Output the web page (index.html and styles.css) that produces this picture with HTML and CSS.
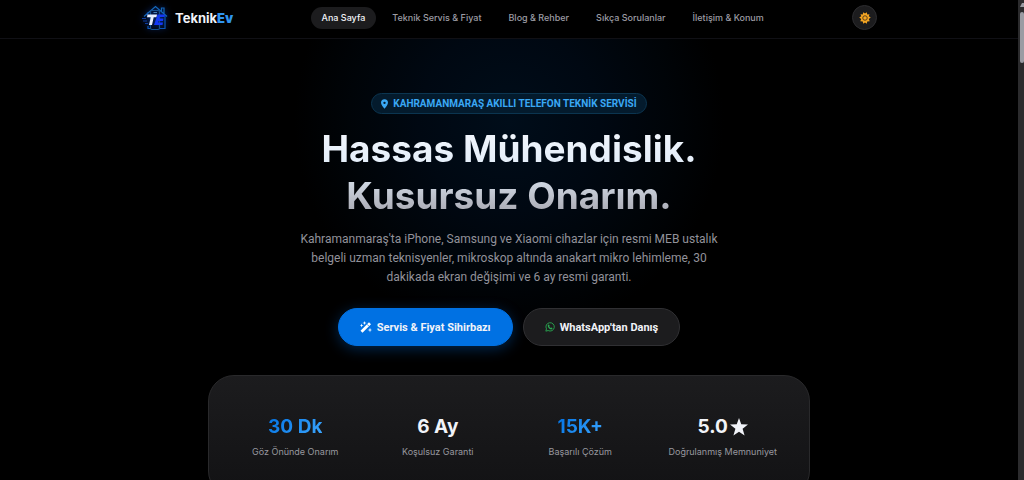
FILE: index.html
```
<!DOCTYPE html>
<html lang="tr">

<head>
    <meta charset="UTF-8">
    <meta name="viewport" content="width=device-width, initial-scale=1.0">
    <title>TeknikEv</title>
    <link rel="stylesheet" href="styles.css">
</head>

<body>
    <header class="navbar">
        <div class="nav-container">
            <a href="#" class="logo">
                <svg class="logo-img" viewBox="0 0 28 28" aria-hidden="true">
                    <g fill="none" stroke="#0b55b8" stroke-width="1.2">
                        <path d="M3 12.5 L14.5 2.5 L26 12.5 M20.500 7.500 V4 H23 V9.500" stroke="#1467b8" />
                        <path d="M6.500 11 V8.500 M24 11.500 V24.500 H18.500 M7 22 V24.500 H9" />
                        <rect x="9.500" y="6.500" width="9" height="19" rx="1.500" stroke="#16508e" />
                        <path d="M1 14.500 H5 M2 17 H6 M4 19.500 H7" stroke="#0d3a9c" stroke-width="1" />
                        <path d="M12.500 8.500 H16" stroke="#4c82b8" />
                    </g>
                    <path d="M6.500 10.500 H16 L15.500 13.200 H12.700 L11 21 H8 L9.800 13.200 H6 Z" fill="#e8efff" />
                    <path d="M16.500 10.500 H24 L23.500 13 H18.500 L18.200 14.500 H22.500 L22 17 H17.600 L17.200 18.500 H22 L21.500 21 H13 Z" fill="#1238f5" />
                </svg>
                <span>Teknik<b>Ev</b></span>
            </a>

            <nav class="nav-links">
                <a href="#" class="active">Ana Sayfa</a>
                <a href="#">Teknik Servis &amp; Fiyat</a>
                <a href="#">Blog &amp; Rehber</a>
                <a href="#">Sıkça Sorulanlar</a>
                <a href="#">İletişim &amp; Konum</a>
            </nav>

            <button class="theme-btn" aria-label="Tema">
                <svg viewBox="0 0 24 24" aria-hidden="true">
                    <path fill="#f5a623" d="M12 3 L15.500 0.500 L16.500 5 L21 4.500 L19.500 8.500 L23.500 11 L19.500 14 L21.500 18.500 L16.500 19 L15.500 23.500 L12 21 L8.500 23.500 L7.500 19 L2.500 18.500 L4.500 14 L0.500 11 L4.500 8.500 L3 4.500 L7.500 5 L8.500 0.500 Z" />
                    <circle cx="12" cy="12" r="4.500" fill="#f5a623" stroke="#4b361a" stroke-width="1.800" />
                </svg>
            </button>
        </div>
    </header>

    <main class="hero">
        <div class="badge">
            <svg viewBox="0 0 12 16" aria-hidden="true">
                <path fill="#3aa8f5" fill-rule="evenodd" d="M6 0 a6 6 0 0 1 6 6 c0 3 -4 8 -6 10 c-2 -2 -6 -7 -6 -10 a6 6 0 0 1 6 -6 Z M6 4 a2 2 0 1 0 0 4 a2 2 0 1 0 0 -4 Z" />
            </svg>
            <span>KAHRAMANMARAŞ AKILLI TELEFON TEKNİK SERVİSİ</span>
        </div>

        <h1>Hassas Mühendislik.<br>Kusursuz Onarım.</h1>

        <p class="hero-text">Kahramanmaraş'ta iPhone, Samsung ve Xiaomi cihazlar için resmi MEB ustalık<br>
            belgeli uzman teknisyenler, mikroskop altında anakart mikro lehimleme, 30<br>
            dakikada ekran değişimi ve 6 ay resmi garanti.</p>

        <div class="hero-buttons">
            <a href="#" class="btn btn-primary">
                <svg viewBox="0 0 24 24" aria-hidden="true">
                    <path d="M1 19.500 L18 2.500 L22 6.500 L5 23.500 Z" fill="#fff" />
                    <path d="M14 6.500 L18 10.500" stroke="#0071e3" stroke-width="1.500" />
                    <path fill="#fff" d="M9 0 L10 3 L13 4 L10 5 L9 8 L8 5 L5 4 L8 3 Z M3 5 L4 8 L7 9 L4 10 L3 13 L2 10 L0 9 L2 8 Z M20 13 L21 17 L24 18 L21 19 L20 23 L19 19 L15 18 L19 17 Z" />
                </svg>
                Servis &amp; Fiyat Sihirbazı
            </a>
            <a href="#" class="btn btn-secondary">
                <svg viewBox="0 0 24 24" aria-hidden="true">
                    <path fill="none" stroke="#2aa952" stroke-width="2.200" d="M2 22 L3.500 16.500 A10 10 0 1 1 7.500 20.500 Z" />
                    <path fill="#2aa952" d="M8.500 6 L10.500 7 L11 9.500 L10 11 C11 12.700 12 13.500 13.500 14.200 L15 13 L18 14.500 C18 17 16 18 14.500 17.700 C10.500 17 7.500 13.500 6.700 10 C6.400 8.200 7.200 6.500 8.500 6 Z" />
                </svg>
                WhatsApp'tan Danış
            </a>
        </div>

        <section class="stats">
            <div class="stat">
                <div class="stat-value blue">30 Dk</div>
                <div class="stat-label">Göz Önünde Onarım</div>
            </div>
            <div class="stat">
                <div class="stat-value">6 Ay</div>
                <div class="stat-label">Koşulsuz Garanti</div>
            </div>
            <div class="stat">
                <div class="stat-value blue">15K+</div>
                <div class="stat-label">Başarılı Çözüm</div>
            </div>
            <div class="stat">
                <div class="stat-value">5.0<svg class="star" viewBox="0 0 20 20" aria-hidden="true"><path fill="#f1f3f8" d="M10 0 L12.500 7 L20 7.300 L14 12 L16.200 19.500 L10 15.200 L3.800 19.500 L6 12 L0 7.300 L7.500 7 Z" /></svg></div>
                <div class="stat-label">Doğrulanmış Memnuniyet</div>
            </div>
        </section>
    </main>

    <div class="scrollbar" aria-hidden="true">
        <div class="scroll-arrow"></div>
        <div class="scroll-thumb"></div>
    </div>
</body>

</html>
```
FILE: styles.css
```
* {
    box-sizing: border-box;
    margin: 0;
    padding: 0;
}

html {
    height: 100%;
    overflow: hidden;
}

body {
    min-height: 100%;
    padding-right: 6px;
    background-color: #000;
    color: #f1f3f8;
    font-family: "Inter", "Liberation Sans", sans-serif;
}

a {
    color: inherit;
    text-decoration: none;
}

/* Navbar */
.navbar {
    border-bottom: 1px solid #101015;
}

.nav-container {
    display: flex;
    justify-content: space-between;
    align-items: center;
    max-width: 736px;
    height: 38px;
    margin: 0 auto;
    padding-bottom: 3px;
}

.logo {
    display: flex;
    align-items: center;
    gap: 6px;
    font-size: 13px;
    font-weight: 700;
}

.logo b {
    color: #2f94ee;
}

.logo-img {
    width: 28px;
    height: 28px;
    border-radius: 8px;
    filter: drop-shadow(0 0 3px #062d80);
}

.nav-links {
    display: flex;
    gap: 5px;
    font-size: 9px;
    font-weight: 500;
    color: #9c9ca4;
}

.nav-links a {
    padding: 0 11px;
    line-height: 22px;
    border-radius: 11px;
}

.nav-links .active {
    background-color: #1c1c1e;
    color: #f1f3f8;
}

.theme-btn {
    display: flex;
    align-items: center;
    justify-content: center;
    width: 25px;
    height: 25px;
    border: 1px solid #2c2c2f;
    border-radius: 50%;
    background-color: #1c1c1e;
    cursor: pointer;
}

.theme-btn svg {
    width: 12px;
    height: 12px;
}

/* Hero */
.hero {
    display: flex;
    flex-direction: column;
    align-items: center;
    padding: 54px 16px 0;
    text-align: center;
    background: radial-gradient(circle at 50% 82px, #000d1a 0, #000812 90px, #000408 160px, #000 215px);
}

.badge {
    display: flex;
    align-items: center;
    gap: 5px;
    height: 21px;
    padding: 0 9px;
    border: 1px solid #0b3550;
    border-radius: 11px;
    background-color: #041b2d;
    color: #3aa8f5;
    font-family: "Roboto", sans-serif;
    font-size: 10px;
    font-weight: 700;
}

.badge svg {
    width: 7px;
    height: 10px;
}

.hero h1 {
    margin-top: 11px;
    font-size: 37px;
    line-height: 47px;
    font-weight: 700;
    background: linear-gradient(180deg, #f5f8fd 0, #e2edf9 45%, #a1a1aa 100%);
    -webkit-background-clip: text;
    background-clip: text;
    color: transparent;
}

.hero-text {
    margin-top: 11px;
    color: #92929a;
    font-family: "Roboto", sans-serif;
    font-size: 12px;
    line-height: 19px;
}

.hero-buttons {
    display: flex;
    gap: 10px;
    margin-top: 21px;
}

.btn {
    display: flex;
    align-items: center;
    gap: 5px;
    height: 38px;
    padding: 0 21px;
    border: 1px solid #0071e3;
    border-radius: 19px;
    font-family: "Roboto", sans-serif;
    font-size: 11px;
    font-weight: 700;
}

.btn svg {
    width: 12px;
    height: 12px;
}

.btn-primary {
    background-color: #0071e3;
    box-shadow: 0 3px 14px rgba(0, 113, 227, 0.35);
}

.btn-secondary {
    border-color: #303033;
    background-color: #1c1c1e;
}

.btn-secondary svg {
    width: 10px;
    height: 10px;
}

/* Stats */
.stats {
    display: grid;
    grid-template-columns: repeat(4, 1fr);
    width: 100%;
    max-width: 602px;
    margin-top: 29px;
    padding: 38px 15px;
    border: 1px solid #29292b;
    border-radius: 26px;
    background: linear-gradient(180deg, #1c1c1e, #121214);
}

.stat-value {
    display: flex;
    align-items: center;
    justify-content: center;
    font-size: 19px;
    line-height: 26px;
    font-weight: 700;
}

.blue {
    width: fit-content;
    margin: 0 auto;
    background: linear-gradient(135deg, #0071e3, #40a9ff);
    -webkit-background-clip: text;
    background-clip: text;
    color: transparent;
}

.star {
    width: 18px;
    height: 18px;
    margin-left: 2px;
}

.stat-label {
    margin-top: 6px;
    color: #98989f;
    font-size: 9px;
    line-height: 12px;
}

/* Scrollbar */
.scrollbar {
    position: fixed;
    top: 0;
    right: 0;
    width: 6px;
    height: 100%;
    background-color: #2b2b2d;
}

.scroll-arrow {
    width: 4px;
    height: 4px;
    margin: 3px 0 5px 2px;
    background-color: #9a9ca3;
    clip-path: polygon(50% 0, 100% 0, 100% 100%, 0 100%);
}

.scroll-thumb {
    width: 4px;
    height: 51px;
    margin-left: 2px;
    border-radius: 2px;
    background-color: #9a9ca3;
}
```
